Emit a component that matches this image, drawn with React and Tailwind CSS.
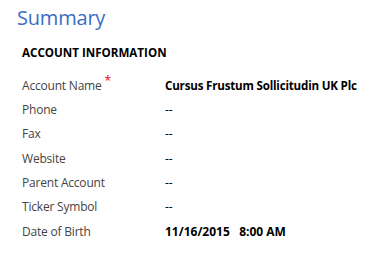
export default function App() {
  const rows = [
    ["Phone", "--"],
    ["Fax", "--"],
    ["Website", "--"],
    ["Parent Account", "--"],
    ["Ticker Symbol", "--"],
  ];
  return (
    <div className="w-[390px] h-[256px] bg-white overflow-hidden" style={{ fontFamily: "'Open Sans', sans-serif" }}>
      <h1 className="pl-[17px] pt-[4px] text-[20px] tracking-[-0.2px] leading-[28px] text-[#3b6cc4]">Summary</h1>
      <h2 className="pl-[22px] mt-[13px] text-[11.6px] font-bold leading-[16px] text-black">ACCOUNT INFORMATION</h2>
      <div className="pl-[22px] mt-[13px] text-[12px]">
        <div className="flex h-[24px] items-center">
          <div className="w-[143px] text-[#444] tracking-[-0.2px]">
            Account Name<span className="relative -top-[5px] ml-[3px] text-red-600">*</span>
          </div>
          <div className="font-bold text-[11.6px] tracking-[-0.2px] text-black">Cursus Frustum Sollicitudin UK Plc</div>
        </div>
        {rows.map(([label, value]) => (
          <div key={label} className="flex h-[24.3px] items-center">
            <div className="w-[143px] text-[#444] tracking-[-0.2px]">{label}</div>
            <div className="text-black">{value}</div>
          </div>
        ))}
        <div className="flex h-[24.3px] items-center">
          <div className="w-[143px] text-[#444] tracking-[-0.2px]">Date of Birth</div>
          <div className="font-bold text-black">11/16/2015&nbsp;&nbsp; 8:00 AM</div>
        </div>
      </div>
    </div>
  );
}
